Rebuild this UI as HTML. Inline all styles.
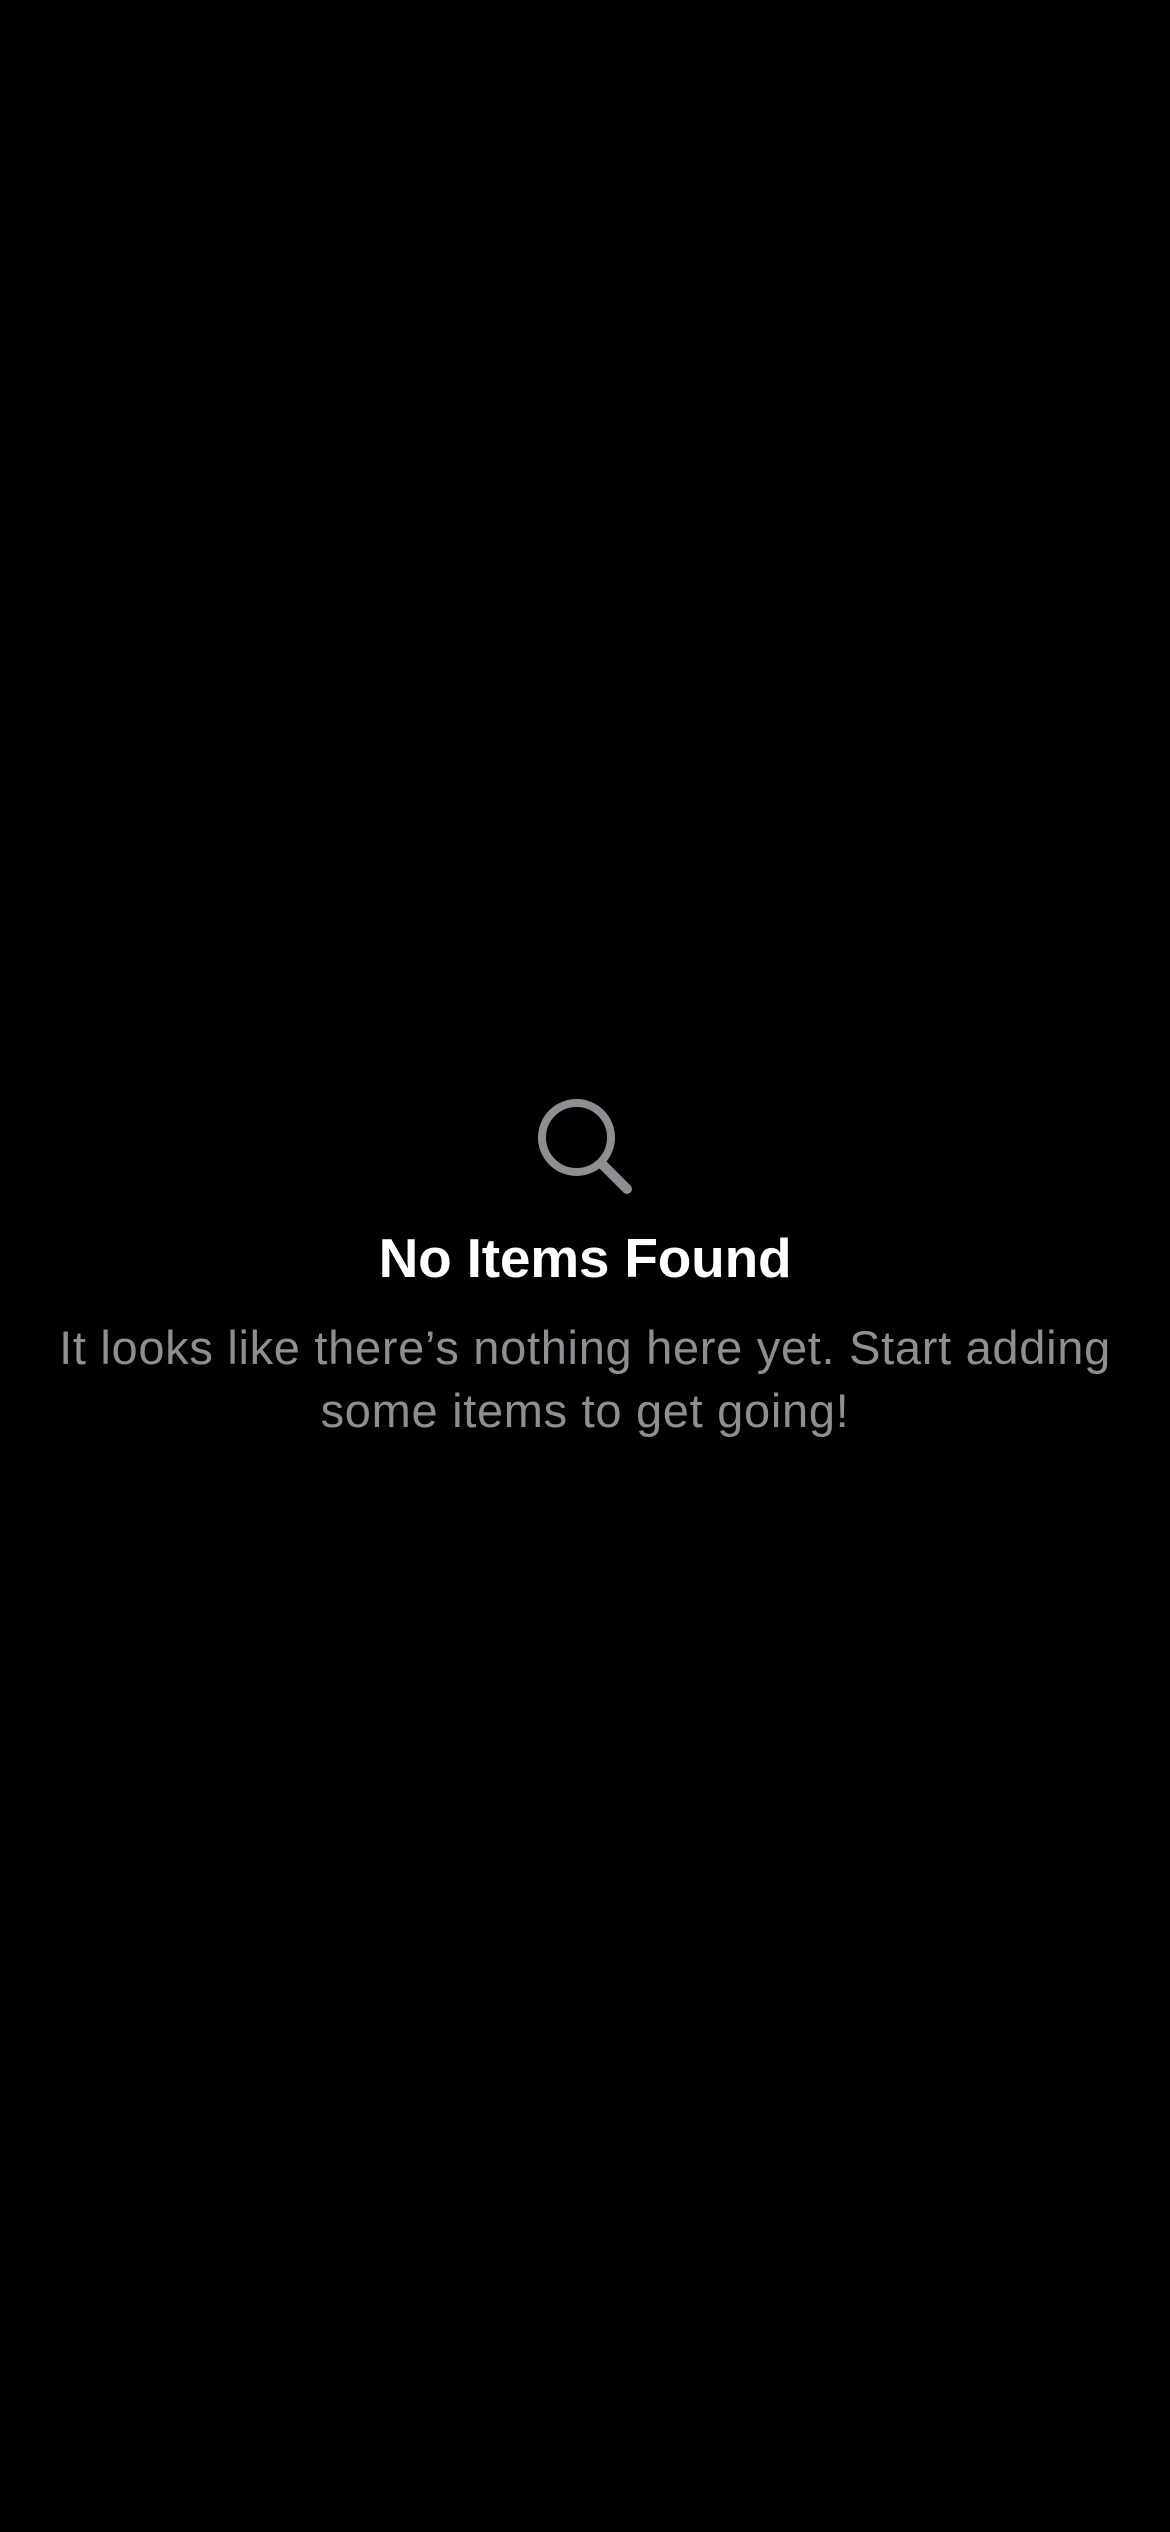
<!DOCTYPE html>
<html><head><meta charset="utf-8"><style>
html,body{margin:0;padding:0;background:#000;width:1170px;height:2532px;overflow:hidden}
.t{position:absolute;left:0;width:1170px;text-align:center;font-family:"Liberation Sans",sans-serif;white-space:nowrap}
.h{top:1226px;font-size:55px;font-weight:bold;color:#fff;letter-spacing:-0.2px;line-height:64px}
.s{top:1316px;font-size:47px;color:#8e8e93;line-height:63px;letter-spacing:0.7px}
</style></head><body>
<svg style="position:absolute;left:0;top:0" width="1170" height="1300">
<circle cx="576.5" cy="1137.5" r="34.5" fill="none" stroke="#8e8e93" stroke-width="8"/>
<line x1="603" y1="1165" x2="627" y2="1189" stroke="#8e8e93" stroke-width="10" stroke-linecap="round"/>
</svg>
<div class="t h">No Items Found</div>
<div class="t s">It looks like there’s nothing here yet. Start adding<br>some items to get going!</div>
</body></html>
